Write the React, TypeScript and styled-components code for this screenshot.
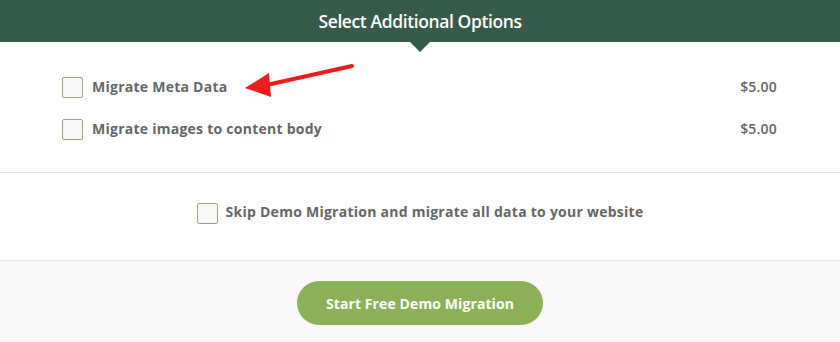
import React from "react";
import styled, { createGlobalStyle } from "styled-components";

const Global = createGlobalStyle`
  body {
    margin: 0;
    background: #fff;
    font-family: "Open Sans", "Liberation Sans", sans-serif;
  }
`;

const Panel = styled.div`
  position: relative;
  width: 840px;
  height: 342px;
  display: flex;
  flex-direction: column;
  overflow: hidden;
`;

const Header = styled.div`
  position: relative;
  height: 42px;
  background: #385a4a;
  color: #fff;
  display: flex;
  align-items: center;
  justify-content: center;
  font-size: 17.5px;
  font-weight: 600;
  letter-spacing: -0.4px;
  &::after {
    content: "";
    position: absolute;
    left: 410px;
    bottom: -10px;
    border-left: 10px solid transparent;
    border-right: 10px solid transparent;
    border-top: 10px solid #385a4a;
  }
`;

const Options = styled.div`
  display: flex;
  flex-direction: column;
  gap: 21px;
  padding: 35px 63px 32px 62px;
  border-bottom: 1px solid #e4e4e4;
`;

const Row = styled.label`
  display: flex;
  align-items: center;
  height: 21px;
`;

const Box = styled.span`
  width: 19px;
  height: 19px;
  border: 1px solid #94a977;
  border-radius: 2px;
  background: #f8f8f8;
  flex: none;
`;

const Label = styled.span<{ gap?: number }>`
  margin-left: ${(p) => p.gap ?? 9}px;
  font-size: 14px;
  font-weight: 700;
  letter-spacing: 0.25px;
  color: #666;
  line-height: 1;
  padding-bottom: 2px;
`;

const Price = styled.span`
  margin-left: auto;
  font-size: 14px;
  font-weight: 600;
  letter-spacing: 0.2px;
  color: #666;
  line-height: 1;
  padding-bottom: 2px;
`;

const Skip = styled.div`
  height: 88px;
  box-sizing: border-box;
  padding-bottom: 7px;
  display: flex;
  align-items: center;
  justify-content: center;
  border-bottom: 1px solid #e4e4e4;
`;

const Footer = styled.div`
  flex: 1;
  background: #f8f8f8;
  display: flex;
  justify-content: center;
  padding-top: 20px;
`;

const Button = styled.button`
  width: 246px;
  height: 44px;
  border: none;
  border-radius: 22px;
  background: #8db158;
  color: #fff;
  font-family: inherit;
  font-size: 14px;
  font-weight: 700;
  letter-spacing: 0.1px;
  cursor: pointer;
`;

const Arrow = styled.svg`
  position: absolute;
  left: 240px;
  top: 60px;
`;

export default function App() {
  return (
    <>
      <Global />
      <Panel>
        <Header>Select Additional Options</Header>
        <Options>
          <Row>
            <Box />
            <Label>Migrate Meta Data</Label>
            <Price>$5.00</Price>
          </Row>
          <Row>
            <Box />
            <Label>Migrate images to content body</Label>
            <Price>$5.00</Price>
          </Row>
        </Options>
        <Skip>
          <Row>
            <Box />
            <Label gap={8}>Skip Demo Migration and migrate all data to your website</Label>
          </Row>
        </Skip>
        <Footer>
          <Button>Start Free Demo Migration</Button>
        </Footer>
        <Arrow width="120" height="40" viewBox="0 0 120 40">
          <line x1="112" y1="6" x2="22" y2="26" stroke="#ee1c1c" strokeWidth="4" strokeLinecap="round" />
          <polygon points="5,28 29,13 31,37" fill="#ee1c1c" />
        </Arrow>
      </Panel>
    </>
  );
}
